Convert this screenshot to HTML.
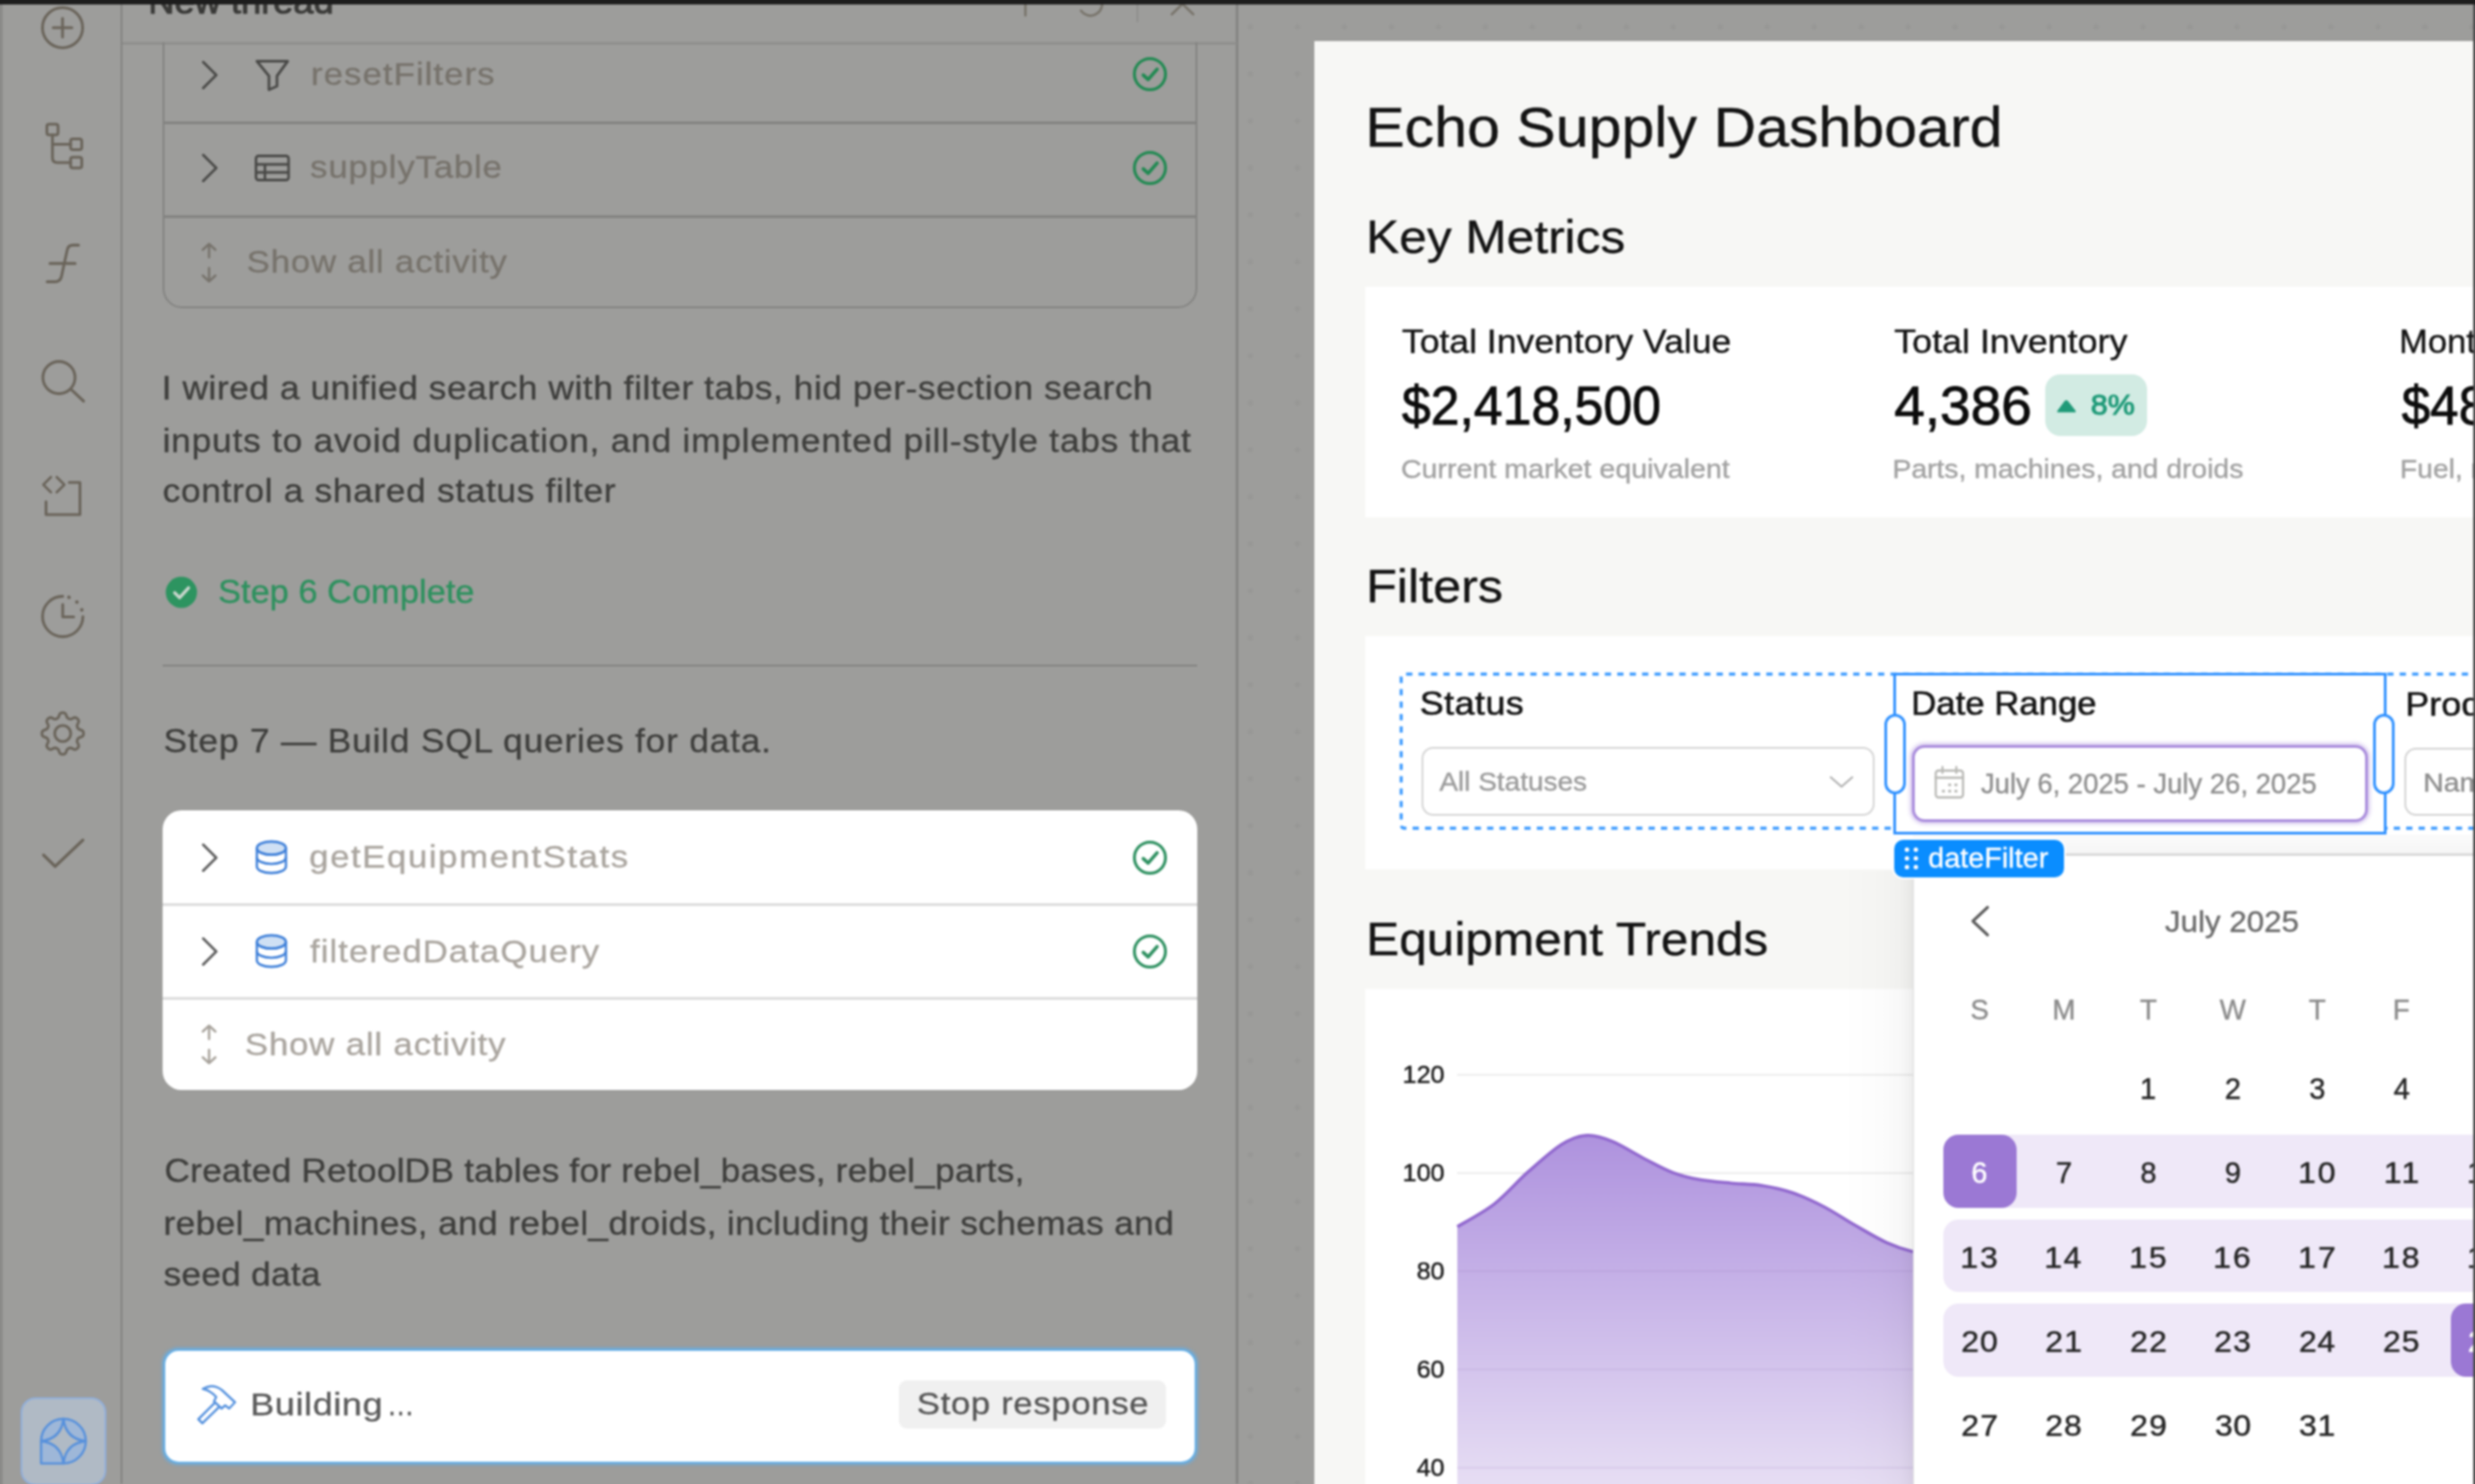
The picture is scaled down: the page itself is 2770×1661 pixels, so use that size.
<!DOCTYPE html>
<html><head><meta charset="utf-8"><title>Echo Supply Dashboard</title>
<style>
html,body{margin:0;padding:0;}
body{width:2770px;height:1661px;position:relative;background:#9d9d9b;font-family:"Liberation Sans",sans-serif;}
.a{position:absolute;box-sizing:border-box;}
.t{position:absolute;white-space:nowrap;line-height:1;transform-origin:0 0;}
svg{position:absolute;overflow:visible;}
#bw{position:absolute;left:-20px;top:-20px;width:2810px;height:1701px;background:#9d9d9b;filter:blur(1px);}
#in{position:absolute;left:20px;top:20px;width:2770px;height:1661px;}
#clip{position:absolute;left:0;top:0;width:2770px;height:1661px;overflow:hidden;contain:strict;}
</style></head><body><div id="clip"><div id="bw"><div id="in">

<div class="a" style="left:-20px;top:0;width:23px;height:1681px;background:#8a8a88;"></div>
<div class="a" style="left:135px;top:0;width:2px;height:1661px;background:#838381;"></div>
<svg style="left:0;top:0" width="136" height="1661" viewBox="0 0 136 1661" fill="none" stroke="#6a645a" stroke-width="3.1" stroke-linecap="round" stroke-linejoin="round">
<circle cx="70" cy="31" r="22.5"/><path d="M70 20.5V41.5M59.5 31H80.5"/>
<rect x="52.5" y="139" width="12.5" height="12" rx="2.5"/><rect x="79" y="155.5" width="12.5" height="12" rx="2.5"/><rect x="79" y="176" width="12.5" height="12" rx="2.5"/>
<path d="M58.7 151V176.5Q58.7 182 64.2 182H79M58.7 161.5H79"/>
<path d="M87.9 274.4H81.5Q76.4 274.4 75.3 279.5L68.8 309.4Q67.5 315.4 61.5 315.4H52.8M55.9 294.9H84.1"/>
<circle cx="66" cy="422.6" r="18"/><path d="M79.6 435.8L93.6 449"/>
<path d="M57 534L48.5 542.5L57 551M63.5 534L72 542.5L63.5 551" stroke-width="2.8"/>
<path d="M51.5 561.5V576H89.5V540H77.5"/>
<path d="M70.2 667.4A22.6 22.6 0 1 0 92.8 690"/><path d="M70.2 667.4A22.6 22.6 0 0 1 92.8 690" stroke-dasharray="0.1 10.2" stroke-dashoffset="-7.1" stroke-width="4"/>
<path d="M70.2 676.5V690.5H82.5"/>
<circle cx="70.2" cy="821" r="9"/>
<path d="M70.2 797.7L71.1 797.8L72.0 798.0L72.9 798.4L73.6 799.3L74.2 800.8L74.7 802.3L75.2 803.2L75.8 803.8L76.4 804.2L77.1 804.5L77.7 804.7L78.4 804.9L79.2 804.9L80.3 804.6L81.6 803.9L83.1 803.2L84.3 803.1L85.2 803.4L86.0 803.9L86.7 804.5L87.3 805.2L87.8 806.0L88.1 806.9L88.0 808.1L87.3 809.6L86.6 810.9L86.3 812.0L86.3 812.8L86.5 813.5L86.7 814.1L87.0 814.8L87.4 815.4L88.0 816.0L88.9 816.5L90.4 817.0L91.9 817.6L92.8 818.3L93.2 819.2L93.4 820.1L93.5 821.0L93.4 821.9L93.2 822.8L92.8 823.7L91.9 824.4L90.4 825.0L88.9 825.5L88.0 826.0L87.4 826.6L87.0 827.2L86.7 827.9L86.5 828.5L86.3 829.2L86.3 830.0L86.6 831.1L87.3 832.4L88.0 833.9L88.1 835.1L87.8 836.0L87.3 836.8L86.7 837.5L86.0 838.1L85.2 838.6L84.3 838.9L83.1 838.8L81.6 838.1L80.3 837.4L79.2 837.1L78.4 837.1L77.7 837.3L77.1 837.5L76.4 837.8L75.8 838.2L75.2 838.8L74.7 839.7L74.2 841.2L73.6 842.7L72.9 843.6L72.0 844.0L71.1 844.2L70.2 844.3L69.3 844.2L68.4 844.0L67.5 843.6L66.8 842.7L66.2 841.2L65.7 839.7L65.2 838.8L64.6 838.2L64.0 837.8L63.3 837.5L62.7 837.3L62.0 837.1L61.2 837.1L60.1 837.4L58.8 838.1L57.3 838.8L56.1 838.9L55.2 838.6L54.4 838.1L53.7 837.5L53.1 836.8L52.6 836.0L52.3 835.1L52.4 833.9L53.1 832.4L53.8 831.1L54.1 830.0L54.1 829.2L53.9 828.5L53.7 827.9L53.4 827.2L53.0 826.6L52.4 826.0L51.5 825.5L50.0 825.0L48.5 824.4L47.6 823.7L47.2 822.8L47.0 821.9L46.9 821.0L47.0 820.1L47.2 819.2L47.6 818.3L48.5 817.6L50.0 817.0L51.5 816.5L52.4 816.0L53.0 815.4L53.4 814.8L53.7 814.1L53.9 813.5L54.1 812.8L54.1 812.0L53.8 810.9L53.1 809.6L52.4 808.1L52.3 806.9L52.6 806.0L53.1 805.2L53.7 804.5L54.4 803.9L55.2 803.4L56.1 803.1L57.3 803.2L58.8 803.9L60.1 804.6L61.2 804.9L62.0 804.9L62.7 804.7L63.3 804.5L64.0 804.2L64.6 803.8L65.2 803.2L65.7 802.3L66.2 800.8L66.8 799.3L67.5 798.4L68.4 798.0L69.3 797.8Z" stroke-width="3" stroke-linejoin="round"/>
<path d="M48.7 957L61.7 969.8L92.8 940.2" stroke-width="3.3"/>
</svg>
<div class="a" style="left:22.5px;top:1564px;width:96px;height:99px;border-radius:17px;background:#b0bac5;border:2px solid #90aedb;"></div>
<svg style="left:40.3px;top:1581.8px" width="62" height="62" viewBox="0 0 62 62" fill="none" stroke="#5690dc" stroke-width="2.5" stroke-linejoin="round">
<path d="M31 6A25 25 0 1 1 31 56H6V31A25 25 0 0 1 31 6Z" fill="#9eb7d8"/>
<path d="M31 6Q33.5 28.5 56 31Q33.5 33.5 31 56Q28.5 33.5 6 31Q28.5 28.5 31 6Z" fill="#b0bac5"/>
</svg>
<div class="a" style="left:1383px;top:0;width:2.5px;height:1661px;background:#858583;"></div>
<div class="a" style="left:137px;top:47px;width:1247px;height:3px;background:#8f8f8d;"></div>
<div class="a" style="left:182px;top:20px;width:1158px;height:325px;border:2.5px solid #838381;border-radius:22px;"></div>
<div class="a" style="left:184px;top:136px;width:1154px;height:2.5px;background:#838381;"></div>
<div class="a" style="left:184px;top:241px;width:1154px;height:2.5px;background:#838381;"></div>
<div class="a" style="left:137px;top:0;width:1246px;height:47px;background:#9d9d9b;"></div>
<div class="t" style="top:-17.94px;font-size:39.50px;color:#3a3a38;transform:scaleX(1.0270);-webkit-text-stroke:1.1px #3a3a38;left:165.67px;">New thread</div>
<svg style="left:1100px;top:0" width="284" height="48" viewBox="1100 0 284 48" fill="none" stroke="#78746b" stroke-width="2.7" stroke-linecap="round">
<path d="M1147.6 -8V17.3M1135 3.2H1160"/>
<path d="M1209.85 11.96A13 13 0 0 0 1233.3 2.24"/>
<path d="M1273 0V24" stroke="#8e8e8c" stroke-width="2"/>
<path d="M1311.5 16L1335.1 -7M1335.5 16L1311.5 -7"/>
</svg>
<svg style="left:225px;top:66.5px" width="20" height="34" viewBox="0 0 20 34" fill="none" stroke="#4a4a48" stroke-width="3" stroke-linecap="round" stroke-linejoin="round"><path d="M2.5 2.5L17 17L2.5 31.5"/></svg>
<svg style="left:284px;top:64px" width="42" height="40" viewBox="284 64 42 40" fill="none" stroke="#4a4a48" stroke-width="3" stroke-linejoin="round"><path d="M287.5 68.5H322L310 85V96.5L301 100.5V85Z"/></svg>
<div class="t" style="top:65.95px;font-size:35.50px;color:#77736c;letter-spacing:1.033px;transform:scaleX(1.1000);-webkit-text-stroke:0.35px #77736c;left:348.21px;">resetFilters</div>
<svg style="left:1267.3px;top:63px" width="40" height="40" viewBox="0 0 40 40" fill="none" stroke="#218a52" stroke-width="3.3" stroke-linecap="round" stroke-linejoin="round"><circle cx="20" cy="20" r="17.4"/><path d="M12.5 21L18 26L28 14.5" stroke-width="3.8"/></svg>
<svg style="left:225px;top:171px" width="20" height="34" viewBox="0 0 20 34" fill="none" stroke="#4a4a48" stroke-width="3" stroke-linecap="round" stroke-linejoin="round"><path d="M2.5 2.5L17 17L2.5 31.5"/></svg>
<svg style="left:284px;top:170px" width="42" height="36" viewBox="284 170 42 36" fill="none" stroke="#4a4a48" stroke-width="2.9" stroke-linejoin="round"><rect x="286.5" y="174.5" width="36.5" height="27" rx="3"/><path d="M286.5 184H323M286.5 193H323M296.5 184V201.5"/></svg>
<div class="t" style="top:170.45px;font-size:35.50px;color:#77736c;letter-spacing:0.782px;transform:scaleX(1.1000);-webkit-text-stroke:0.35px #77736c;left:346.91px;">supplyTable</div>
<svg style="left:1267.3px;top:168px" width="40" height="40" viewBox="0 0 40 40" fill="none" stroke="#218a52" stroke-width="3.3" stroke-linecap="round" stroke-linejoin="round"><circle cx="20" cy="20" r="17.4"/><path d="M12.5 21L18 26L28 14.5" stroke-width="3.8"/></svg>
<svg style="left:224px;top:270.5px" width="20" height="46" viewBox="0 0 20 46" fill="none" stroke="#77736c" stroke-width="2.6" stroke-linecap="round" stroke-linejoin="round"><path d="M10 2V17M3 8.5L10 2L17 8.5M10 44V29M3 37.5L10 44L17 37.5"/></svg>
<div class="t" style="top:276.45px;font-size:35.50px;color:#77736c;letter-spacing:0.771px;transform:scaleX(1.1000);-webkit-text-stroke:0.35px #77736c;left:275.73px;">Show all activity</div>
<div class="t" style="top:416.63px;font-size:36.00px;color:#3e3e3c;letter-spacing:0.529px;transform:scaleX(1.1000);-webkit-text-stroke:0.35px #3e3e3c;left:180.65px;">I wired a unified search with filter tabs, hid per-section search</div>
<div class="t" style="top:475.53px;font-size:36.00px;color:#3e3e3c;letter-spacing:0.744px;transform:scaleX(1.1000);-webkit-text-stroke:0.35px #3e3e3c;left:181.65px;">inputs to avoid duplication, and implemented pill-style tabs that</div>
<div class="t" style="top:532.13px;font-size:36.00px;color:#3e3e3c;letter-spacing:0.641px;transform:scaleX(1.1000);-webkit-text-stroke:0.35px #3e3e3c;left:181.52px;">control a shared status filter</div>
<svg style="left:185px;top:645px" width="36" height="36" viewBox="0 0 36 36"><circle cx="18" cy="18" r="17.5" fill="#2d9460"/><path d="M10.5 18.5L16 24L26 13" fill="none" stroke="#c9d6cd" stroke-width="3.6" stroke-linecap="round" stroke-linejoin="round"/></svg>
<div class="t" style="top:645.33px;font-size:36.00px;color:#2d915e;transform:scaleX(1.0704);-webkit-text-stroke:0.35px #2d915e;left:243.65px;">Step 6 Complete</div>
<div class="a" style="left:182px;top:743.5px;width:1158px;height:2.5px;background:#838381;"></div>
<div class="t" style="top:811.83px;font-size:36.00px;color:#3e3e3c;letter-spacing:0.773px;transform:scaleX(1.1000);-webkit-text-stroke:0.35px #3e3e3c;left:182.60px;">Step 7 — Build SQL queries for data.</div>
<div class="a" style="left:182px;top:907px;width:1158px;height:313px;background:#fff;border-radius:21px;"></div>
<div class="a" style="left:182px;top:1011px;width:1158px;height:3px;background:#dcdcdc;"></div>
<div class="a" style="left:182px;top:1116px;width:1158px;height:3px;background:#dcdcdc;"></div>
<svg style="left:225px;top:942.7px" width="20" height="34" viewBox="0 0 20 34" fill="none" stroke="#5e5e5e" stroke-width="3" stroke-linecap="round" stroke-linejoin="round"><path d="M2.5 2.5L17 17L2.5 31.5"/></svg>
<svg style="left:285.0px;top:940.0px" width="37.5" height="39" viewBox="0 0 40 42" fill="none" stroke="#3f80d9" stroke-width="2.8">
<path d="M2.5 10V32C2.5 36.5 10 40 20 40S37.5 36.5 37.5 32V10"/>
<path d="M2.5 21C2.5 25.5 10 29 20 29S37.5 25.5 37.5 21"/>
<ellipse cx="20" cy="10" rx="17.5" ry="8" fill="#cfe0f4"/>
<path d="M2.5 10C2.5 14.5 10 18 20 18S37.5 14.5 37.5 10" />
</svg>
<div class="t" style="top:942.45px;font-size:35.50px;color:#aaa59f;letter-spacing:1.540px;transform:scaleX(1.1000);-webkit-text-stroke:0.35px #aaa59f;left:346.36px;">getEquipmentStats</div>
<svg style="left:1267.3px;top:939.7px" width="40" height="40" viewBox="0 0 40 40" fill="none" stroke="#2f9161" stroke-width="3.3" stroke-linecap="round" stroke-linejoin="round"><circle cx="20" cy="20" r="17.4"/><path d="M12.5 21L18 26L28 14.5" stroke-width="3.8"/></svg>
<svg style="left:225px;top:1047.5px" width="20" height="34" viewBox="0 0 20 34" fill="none" stroke="#5e5e5e" stroke-width="3" stroke-linecap="round" stroke-linejoin="round"><path d="M2.5 2.5L17 17L2.5 31.5"/></svg>
<svg style="left:285.0px;top:1044.8px" width="37.5" height="39" viewBox="0 0 40 42" fill="none" stroke="#3f80d9" stroke-width="2.8">
<path d="M2.5 10V32C2.5 36.5 10 40 20 40S37.5 36.5 37.5 32V10"/>
<path d="M2.5 21C2.5 25.5 10 29 20 29S37.5 25.5 37.5 21"/>
<ellipse cx="20" cy="10" rx="17.5" ry="8" fill="#cfe0f4"/>
<path d="M2.5 10C2.5 14.5 10 18 20 18S37.5 14.5 37.5 10" />
</svg>
<div class="t" style="top:1047.75px;font-size:35.50px;color:#aaa59f;letter-spacing:1.001px;transform:scaleX(1.1000);-webkit-text-stroke:0.35px #aaa59f;left:347.45px;">filteredDataQuery</div>
<svg style="left:1267.3px;top:1044.5px" width="40" height="40" viewBox="0 0 40 40" fill="none" stroke="#2f9161" stroke-width="3.3" stroke-linecap="round" stroke-linejoin="round"><circle cx="20" cy="20" r="17.4"/><path d="M12.5 21L18 26L28 14.5" stroke-width="3.8"/></svg>
<svg style="left:224px;top:1146px" width="20" height="46" viewBox="0 0 20 46" fill="none" stroke="#a8a39c" stroke-width="2.6" stroke-linecap="round" stroke-linejoin="round"><path d="M10 2V17M3 8.5L10 2L17 8.5M10 44V29M3 37.5L10 44L17 37.5"/></svg>
<div class="t" style="top:1151.95px;font-size:35.50px;color:#aaa59f;letter-spacing:0.799px;transform:scaleX(1.1000);-webkit-text-stroke:0.35px #aaa59f;left:274.23px;">Show all activity</div>
<div class="t" style="top:1293.33px;font-size:36.00px;color:#3e3e3c;letter-spacing:0.163px;transform:scaleX(1.1000);-webkit-text-stroke:0.35px #3e3e3c;left:183.59px;">Created RetoolDB tables for rebel_bases, rebel_parts,</div>
<div class="t" style="top:1351.63px;font-size:36.00px;color:#3e3e3c;letter-spacing:0.322px;transform:scaleX(1.1000);-webkit-text-stroke:0.35px #3e3e3c;left:182.77px;">rebel_machines, and rebel_droids, including their schemas and</div>
<div class="t" style="top:1408.53px;font-size:36.00px;color:#3e3e3c;letter-spacing:0.198px;transform:scaleX(1.1000);-webkit-text-stroke:0.35px #3e3e3c;left:183.10px;">seed data</div>
<div class="a" style="left:183px;top:1510px;width:1156px;height:128px;background:#fff;border:2.6px solid #66b0e8;border-radius:17px;box-shadow:0 0 3px 1.2px rgba(99,173,230,.65);"></div>
<svg style="left:218px;top:1549px" width="50" height="46" viewBox="0 0 50 46" fill="none" stroke="#5692de" stroke-width="2.5" stroke-linejoin="round" stroke-linecap="round">
<path d="M9 5.5Q20 -1 30.5 7L45 20.5L38.5 27.5L34 24L30 27.5L21.5 19.5L24 14.5Q17 7 9 5.5Z"/>
<path d="M22.5 21L4 39.5L8.5 44L27.5 25.5"/>
</svg>
<div class="t" style="top:1554.95px;font-size:35.50px;color:#5a5a5a;letter-spacing:0.531px;transform:scaleX(1.1400);-webkit-text-stroke:0.35px #5a5a5a;left:279.88px;">Building</div>
<div class="t" style="top:1554.95px;font-size:35.50px;color:#5a5a5a;transform:scaleX(0.8700);-webkit-text-stroke:0.35px #5a5a5a;left:433.21px;">…</div>
<div class="a" style="left:1006px;top:1545px;width:299px;height:54px;background:#f0f0f0;border-radius:9px;"></div>
<div class="t" style="top:1553.65px;font-size:35.50px;color:#555555;letter-spacing:0.583px;transform:scaleX(1.1000);-webkit-text-stroke:0.35px #555555;left:1026.03px;">Stop response</div>
<div class="a" style="left:1385px;top:0;width:1385px;height:1661px;background-image:radial-gradient(circle at 50% 50%,#979795 0,#979795 1.7px,rgba(151,151,149,0) 4.1px);background-size:52.58px 52.6px;background-position:-11.79px 3.9px;"></div>
<div class="a" style="left:1471px;top:45.5px;width:1297px;height:1620px;background:#f7f7f5;"></div>
<div class="a" style="left:2768.2px;top:-5px;width:23px;height:1700px;background:#4c4c4c;"></div>
<div class="t" style="top:110.97px;font-size:63.00px;color:#141414;transform:scaleX(1.0497);-webkit-text-stroke:0.4px #141414;left:1527.88px;">Echo Supply Dashboard</div>
<div class="t" style="top:239.71px;font-size:51.50px;color:#141414;transform:scaleX(1.0780);-webkit-text-stroke:0.4px #141414;left:1528.75px;">Key Metrics</div>
<div class="a" style="left:1527.5px;top:321px;width:1240px;height:258px;background:#fff;"></div>
<div class="t" style="top:364.80px;font-size:36.50px;color:#141414;transform:scaleX(1.0902);-webkit-text-stroke:0.4px #141414;left:1569.11px;">Total Inventory Value</div>
<div class="t" style="top:423.86px;font-size:61.00px;color:#0c0c0c;transform:scaleX(0.9495);-webkit-text-stroke:0.95px #0c0c0c;left:1569.38px;">$2,418,500</div>
<div class="t" style="top:509.61px;font-size:30.00px;color:#a2a2a2;transform:scaleX(1.0658);-webkit-text-stroke:0.4px #a2a2a2;left:1568.38px;">Current market equivalent</div>
<div class="t" style="top:364.80px;font-size:36.50px;color:#141414;transform:scaleX(1.0994);-webkit-text-stroke:0.4px #141414;left:2120.10px;">Total Inventory</div>
<div class="t" style="top:423.86px;font-size:61.00px;color:#0c0c0c;transform:scaleX(1.0096);-webkit-text-stroke:0.95px #0c0c0c;left:2119.59px;">4,386</div>
<div class="a" style="left:2289px;top:419px;width:114px;height:69px;background:#d2ebe3;border-radius:17px;"></div>
<svg style="left:2300px;top:446px" width="26" height="18" viewBox="0 0 26 18"><path d="M3.5 15.5Q1.5 15.5 3 13.2L10.2 3.4Q12.6 0.6 15 3.4L22.6 13.2Q24 15.5 22 15.5Z" fill="#1f9a78"/></svg>
<div class="t" style="top:438.34px;font-size:31.50px;color:#1f9a78;transform:scaleX(1.0805);-webkit-text-stroke:1.1px #1f9a78;left:2339.52px;">8%</div>
<div class="t" style="top:509.61px;font-size:30.00px;color:#a2a2a2;transform:scaleX(1.0562);-webkit-text-stroke:0.4px #a2a2a2;left:2118.40px;">Parts, machines, and droids</div>
<div class="a" style="left:2680px;top:330px;width:87.5px;height:240px;overflow:hidden;"><div class="t" style="top:34.80px;font-size:36.50px;color:#141414;transform:scaleX(1.0582);-webkit-text-stroke:0.4px #141414;left:5.43px;">Monthly Spend</div><div class="t" style="top:93.86px;font-size:61.00px;color:#0c0c0c;transform:scaleX(0.9381);-webkit-text-stroke:1.0px #0c0c0c;left:7.99px;">$48,200</div><div class="t" style="top:179.60px;font-size:30.00px;color:#a2a2a2;transform:scaleX(1.0535);-webkit-text-stroke:0.4px #a2a2a2;left:6.31px;">Fuel, maintenance</div></div>
<div class="t" style="top:631.41px;font-size:51.50px;color:#141414;transform:scaleX(1.0925);-webkit-text-stroke:0.4px #141414;left:1528.68px;">Filters</div>
<div class="a" style="left:1527.5px;top:712px;width:1240px;height:260.5px;background:#fff;"></div>
<svg style="left:1560px;top:745px" width="1208" height="195" viewBox="1560 745 1208 195" fill="none"><path d="M2790 754.5H1572Q1568.2 754.5 1568.2 758V923Q1568.2 927 1572 927H2790" stroke="#3d9bff" stroke-width="3.4" stroke-dasharray="7 6.9"/></svg>
<div class="t" style="top:770.10px;font-size:36.50px;color:#141414;letter-spacing:0.445px;transform:scaleX(1.1000);-webkit-text-stroke:0.65px #141414;left:1589.18px;">Status</div>
<div class="a" style="left:1590.5px;top:835.5px;width:507px;height:77px;border:2.5px solid #d4d4d4;border-radius:13px;background:#fff;"></div>
<div class="t" style="top:860.00px;font-size:30.00px;color:#9b9b9b;transform:scaleX(1.0428);-webkit-text-stroke:0.4px #9b9b9b;left:1610.54px;">All Statuses</div>
<svg style="left:2046px;top:866px" width="30" height="18" viewBox="0 0 30 18" fill="none" stroke="#b0b0b0" stroke-width="2.3" stroke-linecap="round" stroke-linejoin="round"><path d="M3 4L15 14.5L27 4"/></svg>
<div class="a" style="left:2118.5px;top:752.5px;width:552.5px;height:181px;border:3px solid #2e90ff;background:#fff;"></div>
<div class="t" style="top:770.10px;font-size:36.50px;color:#141414;transform:scaleX(1.0647);-webkit-text-stroke:0.65px #141414;left:2138.81px;">Date Range</div>
<div class="a" style="left:2139.5px;top:834px;width:510px;height:85.5px;border:3.4px solid #a98cdc;border-radius:14px;background:#fff;box-shadow:0 0 4px 2px rgba(169,140,220,.55);"></div>
<svg style="left:2164px;top:856px" width="36" height="40" viewBox="0 0 36 40" fill="none" stroke="#b9b9b5" stroke-width="2.4" stroke-linecap="round" stroke-linejoin="round"><rect x="2.5" y="6.5" width="30.5" height="30" rx="3"/><path d="M2.5 14.5H33M10 2.5V9M25.5 2.5V9"/><path d="M11 29.5h.1M18 29.5h.1M25 29.5h.1M18 22.5h.1M25 22.5h.1" stroke-width="3.6"/></svg>
<div class="t" style="top:862.18px;font-size:30.50px;color:#8f8f8f;transform:scaleX(1.0075);-webkit-text-stroke:0.4px #8f8f8f;left:2216.52px;">July 6, 2025 - July 26, 2025</div>
<div class="a" style="left:2109.2px;top:799.3px;width:24px;height:90px;border:3px solid #2e90ff;border-radius:12px;background:#fff;"></div>
<div class="a" style="left:2656.4px;top:799.3px;width:24px;height:90px;border:3px solid #2e90ff;border-radius:12px;background:#fff;"></div>
<div class="a" style="left:2680px;top:760px;width:87.5px;height:165px;overflow:hidden;"><div class="t" style="top:11.30px;font-size:36.50px;color:#141414;letter-spacing:0.081px;transform:scaleX(1.1000);-webkit-text-stroke:0.6px #141414;left:11.91px;">Product Search</div><div class="a" style="left:10.5px;top:76.5px;width:300px;height:76px;border:2.5px solid #d2d2d2;border-radius:13px;background:#fff;"></div><div class="t" style="top:100.81px;font-size:30.00px;color:#8e8e8e;transform:scaleX(1.0650);-webkit-text-stroke:0.4px #8e8e8e;left:32.38px;">Name or SKU</div></div>
<div class="t" style="top:1025.81px;font-size:51.50px;color:#141414;transform:scaleX(1.0768);-webkit-text-stroke:0.4px #141414;left:1528.75px;">Equipment Trends</div>
<div class="a" style="left:1527.5px;top:1107px;width:1240px;height:560px;background:#fff;"></div>
<div class="a" style="left:1631px;top:1201.8px;width:1137px;height:2px;background:#ececec;"></div>
<div class="t" style="top:1188.13px;font-size:28.20px;color:#1c1c1c;-webkit-text-stroke:0.5px #1c1c1c;left:1569.75px;">120</div>
<div class="a" style="left:1631px;top:1311.8px;width:1137px;height:2px;background:#ececec;"></div>
<div class="t" style="top:1298.13px;font-size:28.20px;color:#1c1c1c;-webkit-text-stroke:0.5px #1c1c1c;left:1569.75px;">100</div>
<div class="a" style="left:1631px;top:1421.8px;width:1137px;height:2px;background:#ececec;"></div>
<div class="t" style="top:1408.13px;font-size:28.20px;color:#1c1c1c;-webkit-text-stroke:0.5px #1c1c1c;left:1585.44px;">80</div>
<div class="a" style="left:1631px;top:1531.8px;width:1137px;height:2px;background:#ececec;"></div>
<div class="t" style="top:1518.13px;font-size:28.20px;color:#1c1c1c;-webkit-text-stroke:0.5px #1c1c1c;left:1585.44px;">60</div>
<div class="a" style="left:1631px;top:1641.8px;width:1137px;height:2px;background:#ececec;"></div>
<div class="t" style="top:1628.13px;font-size:28.20px;color:#1c1c1c;-webkit-text-stroke:0.5px #1c1c1c;left:1585.44px;">40</div>
<svg style="left:1631px;top:1200px" width="700" height="470" viewBox="1631 1200 700 470">
<defs><linearGradient id="ag" x1="0" y1="1270" x2="0" y2="1700" gradientUnits="userSpaceOnUse"><stop offset="0" stop-color="#ae92de"/><stop offset="1" stop-color="#ece5f6"/></linearGradient></defs>
<path d="M1631.0 1373.0C1637.9 1368.8 1659.2 1357.8 1672.4 1347.6C1685.6 1337.4 1697.6 1322.8 1710.2 1311.7C1722.8 1300.6 1737.0 1287.5 1748.0 1280.7C1759.0 1273.9 1766.8 1271.3 1776.3 1270.8C1785.8 1270.3 1793.7 1273.1 1804.7 1277.6C1815.7 1282.1 1831.2 1292.2 1842.5 1298.0C1853.8 1303.8 1862.8 1308.9 1872.7 1312.6C1882.6 1316.3 1891.3 1318.4 1902.0 1320.3C1912.7 1322.2 1925.3 1323.1 1937.0 1324.2C1948.7 1325.3 1960.5 1325.2 1972.0 1327.0C1983.5 1328.8 1994.5 1331.1 2006.0 1335.0C2017.5 1338.9 2029.3 1344.5 2041.0 1350.5C2052.7 1356.5 2064.3 1364.6 2076.0 1371.3C2087.7 1378.0 2100.2 1385.6 2111.0 1390.6C2121.8 1395.5 2128.7 1397.9 2141.0 1401.0C2153.3 1404.1 2153.5 1411.7 2185.0 1409.0C2216.5 1406.3 2305.8 1389.0 2330.0 1385.0V1670H1631Z" fill="url(#ag)"/>
<path d="M1631.0 1373.0C1637.9 1368.8 1659.2 1357.8 1672.4 1347.6C1685.6 1337.4 1697.6 1322.8 1710.2 1311.7C1722.8 1300.6 1737.0 1287.5 1748.0 1280.7C1759.0 1273.9 1766.8 1271.3 1776.3 1270.8C1785.8 1270.3 1793.7 1273.1 1804.7 1277.6C1815.7 1282.1 1831.2 1292.2 1842.5 1298.0C1853.8 1303.8 1862.8 1308.9 1872.7 1312.6C1882.6 1316.3 1891.3 1318.4 1902.0 1320.3C1912.7 1322.2 1925.3 1323.1 1937.0 1324.2C1948.7 1325.3 1960.5 1325.2 1972.0 1327.0C1983.5 1328.8 1994.5 1331.1 2006.0 1335.0C2017.5 1338.9 2029.3 1344.5 2041.0 1350.5C2052.7 1356.5 2064.3 1364.6 2076.0 1371.3C2087.7 1378.0 2100.2 1385.6 2111.0 1390.6C2121.8 1395.5 2128.7 1397.9 2141.0 1401.0C2153.3 1404.1 2153.5 1411.7 2185.0 1409.0C2216.5 1406.3 2305.8 1389.0 2330.0 1385.0" fill="none" stroke="#9269cf" stroke-width="3.6"/>
<g stroke="rgba(120,90,170,.10)" stroke-width="2"><path d="M1631 1422.8H2330M1631 1532.8H2330M1631 1642.8H2330"/></g>
</svg>
<div class="a" style="left:2141px;top:934px;width:640px;height:22px;background:linear-gradient(to bottom,rgba(0,0,0,.015),rgba(0,0,0,.04));"></div>
<div class="a" style="left:2060px;top:975px;width:82px;height:700px;background:linear-gradient(to right,rgba(0,0,0,0),rgba(0,0,0,.012) 55%,rgba(0,0,0,.028) 82%,rgba(0,0,0,.07));"></div>
<div class="a" style="left:2141px;top:955px;width:640px;height:720px;background:#fff;border-top:3.5px solid #dadada;border-left:1.5px solid #dcdcdc;"></div>
<svg style="left:2203px;top:1012px" width="26" height="38" viewBox="0 0 26 38" fill="none" stroke="#5c5c5c" stroke-width="3.2" stroke-linecap="round" stroke-linejoin="round"><path d="M21.5 3.5L5 19L21.5 34.5"/></svg>
<div class="t" style="top:1014.64px;font-size:33.50px;color:#6c6c6c;transform:scaleX(1.0461);-webkit-text-stroke:0.4px #6c6c6c;left:2423.25px;">July 2025</div>
<div class="t" style="top:1115.36px;font-size:31.00px;color:#8b8b8b;-webkit-text-stroke:0.4px #8b8b8b;left:2205.17px;">S</div>
<div class="t" style="top:1115.36px;font-size:31.00px;color:#8b8b8b;-webkit-text-stroke:0.4px #8b8b8b;left:2297.09px;">M</div>
<div class="t" style="top:1115.36px;font-size:31.00px;color:#8b8b8b;-webkit-text-stroke:0.4px #8b8b8b;left:2395.04px;">T</div>
<div class="t" style="top:1115.36px;font-size:31.00px;color:#8b8b8b;-webkit-text-stroke:0.4px #8b8b8b;left:2484.36px;">W</div>
<div class="t" style="top:1115.36px;font-size:31.00px;color:#8b8b8b;-webkit-text-stroke:0.4px #8b8b8b;left:2584.04px;">T</div>
<div class="t" style="top:1115.36px;font-size:31.00px;color:#8b8b8b;-webkit-text-stroke:0.4px #8b8b8b;left:2677.88px;">F</div>
<div class="t" style="top:1115.36px;font-size:31.00px;color:#8b8b8b;-webkit-text-stroke:0.4px #8b8b8b;left:2772.17px;">S</div>
<div class="a" style="left:2175px;top:1270px;width:620px;height:81.5px;background:#efe8f8;border-radius:17px;"></div>
<div class="a" style="left:2175px;top:1364.5px;width:620px;height:81.5px;background:#efe8f8;border-radius:17px;"></div>
<div class="a" style="left:2175px;top:1459px;width:620px;height:81.5px;background:#efe8f8;border-radius:17px;"></div>
<div class="a" style="left:2175px;top:1270px;width:82px;height:81.5px;background:#9b78d4;border-radius:17px;"></div>
<div class="a" style="left:2742.5px;top:1459px;width:82px;height:81.5px;background:#9b78d4;border-radius:17px;"></div>
<div class="t" style="top:1202.79px;font-size:32.50px;color:#262626;-webkit-text-stroke:0.5px #262626;left:2395.02px;">1</div>
<div class="t" style="top:1202.79px;font-size:32.50px;color:#262626;-webkit-text-stroke:0.5px #262626;left:2489.96px;">2</div>
<div class="t" style="top:1202.79px;font-size:32.50px;color:#262626;-webkit-text-stroke:0.5px #262626;left:2584.56px;">3</div>
<div class="t" style="top:1202.79px;font-size:32.50px;color:#262626;-webkit-text-stroke:0.5px #262626;left:2679.07px;">4</div>
<div class="t" style="top:1202.79px;font-size:32.50px;color:#262626;-webkit-text-stroke:0.5px #262626;left:2773.49px;">5</div>
<div class="t" style="top:1297.19px;font-size:32.50px;color:#fff;-webkit-text-stroke:0.5px #fff;left:2206.35px;">6</div>
<div class="t" style="top:1297.19px;font-size:32.50px;color:#262626;-webkit-text-stroke:0.5px #262626;left:2300.95px;">7</div>
<div class="t" style="top:1297.19px;font-size:32.50px;color:#262626;-webkit-text-stroke:0.5px #262626;left:2395.46px;">8</div>
<div class="t" style="top:1297.19px;font-size:32.50px;color:#262626;-webkit-text-stroke:0.5px #262626;left:2489.97px;">9</div>
<div class="t" style="top:1297.19px;font-size:32.50px;color:#262626;letter-spacing:1.823px;transform:scaleX(1.1000);-webkit-text-stroke:0.5px #262626;left:2571.95px;">10</div>
<div class="t" style="top:1297.19px;font-size:32.50px;color:#262626;letter-spacing:2.359px;transform:scaleX(1.1000);-webkit-text-stroke:0.5px #262626;left:2667.66px;">11</div>
<div class="t" style="top:1297.19px;font-size:32.50px;color:#262626;letter-spacing:2.188px;transform:scaleX(1.1000);-webkit-text-stroke:0.5px #262626;left:2760.95px;">12</div>
<div class="t" style="top:1391.59px;font-size:32.50px;color:#262626;letter-spacing:1.981px;transform:scaleX(1.1000);-webkit-text-stroke:0.5px #262626;left:2193.95px;">13</div>
<div class="t" style="top:1391.59px;font-size:32.50px;color:#262626;letter-spacing:1.505px;transform:scaleX(1.1000);-webkit-text-stroke:0.5px #262626;left:2288.45px;">14</div>
<div class="t" style="top:1391.59px;font-size:32.50px;color:#262626;letter-spacing:1.918px;transform:scaleX(1.1000);-webkit-text-stroke:0.5px #262626;left:2382.95px;">15</div>
<div class="t" style="top:1391.59px;font-size:32.50px;color:#262626;letter-spacing:1.981px;transform:scaleX(1.1000);-webkit-text-stroke:0.5px #262626;left:2477.45px;">16</div>
<div class="t" style="top:1391.59px;font-size:32.50px;color:#262626;letter-spacing:2.188px;transform:scaleX(1.1000);-webkit-text-stroke:0.5px #262626;left:2571.95px;">17</div>
<div class="t" style="top:1391.59px;font-size:32.50px;color:#262626;letter-spacing:1.965px;transform:scaleX(1.1000);-webkit-text-stroke:0.5px #262626;left:2666.45px;">18</div>
<div class="t" style="top:1391.59px;font-size:32.50px;color:#262626;letter-spacing:2.092px;transform:scaleX(1.1000);-webkit-text-stroke:0.5px #262626;left:2760.95px;">19</div>
<div class="t" style="top:1485.99px;font-size:32.50px;color:#262626;letter-spacing:0.981px;transform:scaleX(1.1000);-webkit-text-stroke:0.5px #262626;left:2194.88px;">20</div>
<div class="t" style="top:1485.99px;font-size:32.50px;color:#262626;letter-spacing:1.299px;transform:scaleX(1.1000);-webkit-text-stroke:0.5px #262626;left:2289.38px;">21</div>
<div class="t" style="top:1485.99px;font-size:32.50px;color:#262626;letter-spacing:1.346px;transform:scaleX(1.1000);-webkit-text-stroke:0.5px #262626;left:2383.88px;">22</div>
<div class="t" style="top:1485.99px;font-size:32.50px;color:#262626;letter-spacing:1.140px;transform:scaleX(1.1000);-webkit-text-stroke:0.5px #262626;left:2478.38px;">23</div>
<div class="t" style="top:1485.99px;font-size:32.50px;color:#262626;letter-spacing:0.664px;transform:scaleX(1.1000);-webkit-text-stroke:0.5px #262626;left:2572.88px;">24</div>
<div class="t" style="top:1485.99px;font-size:32.50px;color:#262626;letter-spacing:1.077px;transform:scaleX(1.1000);-webkit-text-stroke:0.5px #262626;left:2667.38px;">25</div>
<div class="t" style="top:1485.99px;font-size:32.50px;color:#fff;letter-spacing:1.140px;transform:scaleX(1.1000);-webkit-text-stroke:0.5px #fff;left:2761.88px;">26</div>
<div class="t" style="top:1580.39px;font-size:32.50px;color:#262626;letter-spacing:1.346px;transform:scaleX(1.1000);-webkit-text-stroke:0.5px #262626;left:2194.88px;">27</div>
<div class="t" style="top:1580.39px;font-size:32.50px;color:#262626;letter-spacing:1.124px;transform:scaleX(1.1000);-webkit-text-stroke:0.5px #262626;left:2289.38px;">28</div>
<div class="t" style="top:1580.39px;font-size:32.50px;color:#262626;letter-spacing:1.251px;transform:scaleX(1.1000);-webkit-text-stroke:0.5px #262626;left:2383.88px;">29</div>
<div class="t" style="top:1580.39px;font-size:32.50px;color:#262626;letter-spacing:0.585px;transform:scaleX(1.1000);-webkit-text-stroke:0.5px #262626;left:2478.81px;">30</div>
<div class="t" style="top:1580.39px;font-size:32.50px;color:#262626;letter-spacing:0.902px;transform:scaleX(1.1000);-webkit-text-stroke:0.5px #262626;left:2573.31px;">31</div>
<div class="a" style="left:2117.5px;top:937.5px;width:194px;height:46.5px;background:#0a8dff;border:2px solid #fff;border-radius:12px;"></div>
<svg style="left:2130px;top:946px" width="20" height="30" viewBox="0 0 20 30" fill="#fff"><circle cx="4.2" cy="5" r="2.5"/><circle cx="14.2" cy="5" r="2.5"/><circle cx="4.2" cy="14.8" r="2.5"/><circle cx="14.2" cy="14.8" r="2.5"/><circle cx="4.2" cy="24.6" r="2.5"/><circle cx="14.2" cy="24.6" r="2.5"/></svg>
<div class="t" style="top:945.46px;font-size:31.00px;color:#fff;transform:scaleX(1.0399);-webkit-text-stroke:0.4px #fff;left:2157.65px;">dateFilter</div>
<div class="a" style="left:2768.2px;top:-5px;width:23px;height:1700px;background:#4c4c4c;"></div>
<div class="a" style="left:-20px;top:-20px;width:2810px;height:24.6px;background:#1d1d1d;"></div>
</div></div></div></body></html>
